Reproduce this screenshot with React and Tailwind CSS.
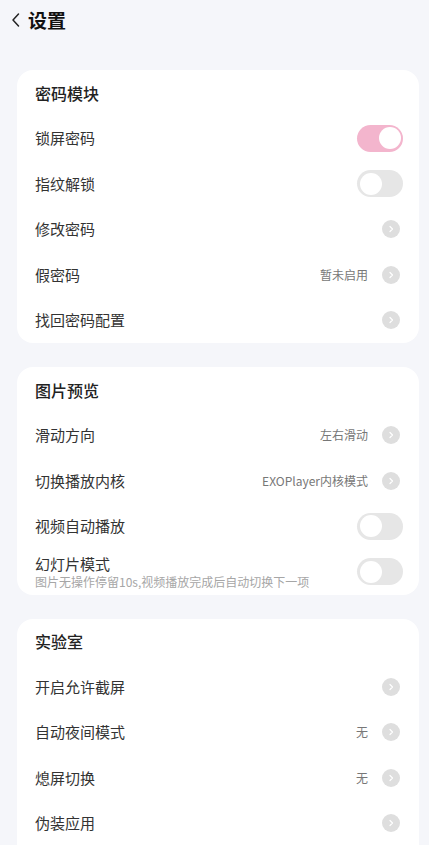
import { useState } from 'react'

const FONT = { fontFamily: '"Noto Sans CJK SC", "Noto Sans", sans-serif' }

function Toggle({ on, onChange }) {
  return (
    <button
      onClick={() => onChange(!on)}
      className={`w-[46px] h-[27px] rounded-full p-[2.5px] flex items-center ${on ? 'bg-[#f3b5cd] justify-end' : 'bg-[#e6e6e6] justify-start'}`}
    >
      <span className="block w-[22px] h-[22px] rounded-full bg-white" />
    </button>
  )
}

function Arrow() {
  return (
    <span className="w-[18px] h-[18px] rounded-full bg-[#dedede] flex items-center justify-center mr-[3px]">
      <svg width="8" height="8" viewBox="0 0 8 8" fill="none">
        <path d="M3 1.5 L5.5 4 L3 6.5" stroke="white" strokeWidth="1.2" strokeLinecap="round" strokeLinejoin="round" />
      </svg>
    </span>
  )
}

function Row({ label, sub, value, toggle, on, onChange }) {
  return (
    <div className="h-[45.5px] flex items-center justify-between">
      <div className="flex flex-col">
        <span className="text-[15px] leading-[18px] text-[#333]">{label}</span>
        {sub && <span className="text-[12px] leading-[15px] text-[#a6a6a6] mt-[1px]">{sub}</span>}
      </div>
      {toggle ? (
        <Toggle on={on} onChange={onChange} />
      ) : (
        <div className="flex items-center gap-[14px]">
          {value && <span className="text-[12px] text-[#777]">{value}</span>}
          <Arrow />
        </div>
      )}
    </div>
  )
}

function Card({ title, children }) {
  return (
    <div className="bg-white rounded-[16px] pl-[18px] pr-[16px]">
      <div className="h-[45.5px] flex items-center text-[16px] font-medium text-[#222]">{title}</div>
      {children}
    </div>
  )
}

export default function App() {
  const [lock, setLock] = useState(true)
  const [finger, setFinger] = useState(false)
  const [autoplay, setAutoplay] = useState(false)
  const [slide, setSlide] = useState(false)

  return (
    <div className="min-h-screen bg-[#f5f6fa]" style={FONT}>
      <div className="h-10 flex items-center pl-[10px] gap-[6px]">
        <svg width="12" height="16" viewBox="0 0 12 16" fill="none">
          <path d="M8.5 2 L3 8 L8.5 14" stroke="#222" strokeWidth="1.5" strokeLinecap="round" strokeLinejoin="round" />
        </svg>
        <span className="text-[19px] font-bold text-[#111]">设置</span>
      </div>
      <div className="pt-[30px] pl-[17px] pr-[10px] flex flex-col gap-[24px]">
        <Card title="密码模块">
          <Row label="锁屏密码" toggle on={lock} onChange={setLock} />
          <Row label="指纹解锁" toggle on={finger} onChange={setFinger} />
          <Row label="修改密码" />
          <Row label="假密码" value="暂未启用" />
          <Row label="找回密码配置" />
        </Card>
        <Card title="图片预览">
          <Row label="滑动方向" value="左右滑动" />
          <Row label="切换播放内核" value="EXOPlayer内核模式" />
          <Row label="视频自动播放" toggle on={autoplay} onChange={setAutoplay} />
          <Row label="幻灯片模式" sub="图片无操作停留10s,视频播放完成后自动切换下一项" toggle on={slide} onChange={setSlide} />
        </Card>
        <Card title="实验室">
          <Row label="开启允许截屏" />
          <Row label="自动夜间模式" value="无" />
          <Row label="熄屏切换" value="无" />
          <Row label="伪装应用" />
          <div className="h-[20px]" />
        </Card>
      </div>
    </div>
  )
}
